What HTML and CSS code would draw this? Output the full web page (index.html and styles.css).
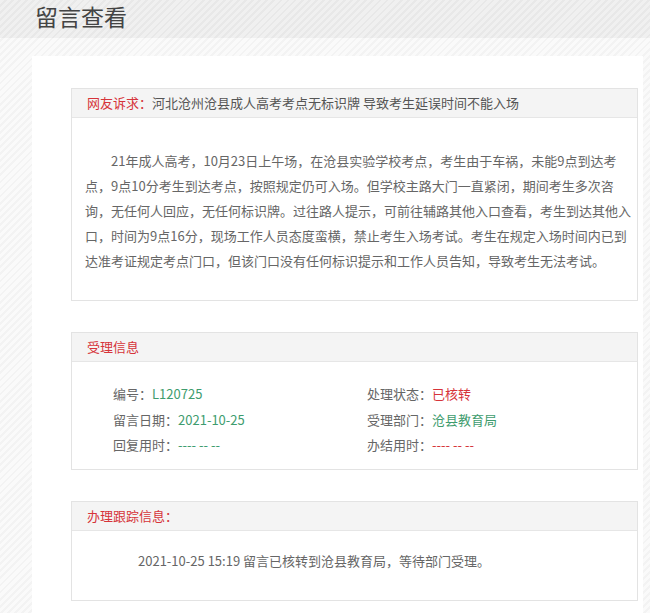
FILE: index.html
```html
<!DOCTYPE html>
<html lang="zh-CN">
<head>
<meta charset="utf-8">
<title>留言查看</title>
<link rel="stylesheet" href="styles.css">
</head>
<body>
<div class="top">
  <h1 class="title">留言查看</h1>
</div>
<div class="page">
  <div class="main">
    <section class="panel">
      <div class="panel-head"><span class="red">网友诉求：</span>河北沧州沧县成人高考考点无标识牌 导致考生延误时间不能入场</div>
      <div class="panel-body content">21年成人高考，10月23日上午场，在沧县实验学校考点，考生由于车祸，未能9点到达考<br>点，9点10分考生到达考点，按照规定仍可入场。但学校主路大门一直紧闭，期间考生多次咨<br>询，无任何人回应，无任何标识牌。过往路人提示，可前往辅路其他入口查看，考生到达其他入<br>口，时间为9点16分，现场工作人员态度蛮横，禁止考生入场考试。考生在规定入场时间内已到<br>达准考证规定考点门口，但该门口没有任何标识提示和工作人员告知，导致考生无法考试。</div>
    </section>
    <section class="panel">
      <div class="panel-head red">受理信息</div>
      <div class="panel-body info">
        <div>编号：<span class="green">L120725</span></div>
        <div>处理状态：<span class="red">已核转</span></div>
        <div>留言日期：<span class="green">2021-10-25</span></div>
        <div>受理部门：<span class="green">沧县教育局</span></div>
        <div>回复用时：<span class="green">---- -- --</span></div>
        <div>办结用时：<span class="red">---- -- --</span></div>
      </div>
    </section>
    <section class="panel">
      <div class="panel-head red">办理跟踪信息：</div>
      <div class="panel-body track">2021-10-25 15:19 留言已核转到沧县教育局，等待部门受理。</div>
    </section>
  </div>
</div>
</body>
</html>
```

FILE: styles.css
```css
html, body {
  margin: 0;
  padding: 0;
}
body {
  font-family: "Noto Sans CJK SC", "Noto Sans", sans-serif;
  color: #666;
  font-size: 13px;
  background: repeating-linear-gradient(135deg, #fafafa 0 3px, #f3f3f3 3px 5px);
}
.top {
  height: 38px;
  background: repeating-linear-gradient(135deg, #f0f0f0 0 3px, #e8e8e8 3px 5px);
}
.title {
  margin: 0;
  padding-left: 35px;
  font-size: 23px;
  font-weight: normal;
  line-height: 32px;
  color: #444;
}
.page {
  padding: 18px 7px 0 32px;
}
.main {
  background: #fff;
  padding: 32px 5px 0 39px;
  min-height: 525px;
}
.panel {
  border: 1px solid #e3e3e3;
  margin-bottom: 31px;
}
.panel:last-child {
  margin-bottom: 0;
}
.panel-head {
  height: 28px;
  line-height: 28px;
  background: #f4f4f4;
  border-bottom: 1px solid #e6e6e6;
  padding-left: 15px;
  color: #555;
}
.red {
  color: #d6343a;
}
.green {
  color: #3e9c6e;
}
.content {
  padding: 30px 0 27px 13px;
  line-height: 25px;
  text-indent: 2em;
  white-space: nowrap;
}
.info {
  display: grid;
  grid-template-columns: 254px 1fr;
  padding: 19px 0 11px 41px;
  line-height: 25.5px;
}
.track {
  padding: 17px 0 27px 66px;
  line-height: 25px;
}
```
